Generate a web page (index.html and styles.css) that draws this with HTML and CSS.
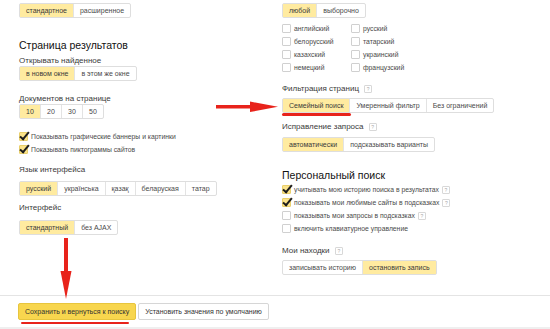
FILE: index.html
```html
<html>
<head>
    <title>Настройки поиска</title>
    <link rel="stylesheet" href="styles.css">
</head>
<body>
    <div class="page">
        <div class="cols">
            <div class="col left">
                <div class="seg"><span class="on">стандартное</span><span>расширенное</span></div>

                <h2 class="title">Страница результатов</h2>
                <div class="label first">Открывать найденное</div>
                <div class="seg"><span class="on">в новом окне</span><span>в этом же окне</span></div>

                <div class="label gap12">Документов на странице</div>
                <div class="seg nums"><span class="on">10</span><span>20</span><span>30</span><span>50</span></div>

                <div class="checks gap11">
                    <div class="check on"><i></i>Показывать графические баннеры и картинки</div>
                    <div class="check on"><i></i>Показывать пиктограммы сайтов</div>
                </div>

                <div class="label gap8">Язык интерфейса</div>
                <div class="seg gap6"><span class="on">русский</span><span>українська</span><span>қазақ</span><span>беларуская</span><span>татар</span></div>

                <div class="label gap6">Интерфейс</div>
                <div class="seg gap7"><span class="on">стандартный</span><span>без AJAX</span></div>
            </div>

            <div class="col right">
                <div class="seg"><span class="on">любой</span><span>выборочно</span></div>

                <div class="langs">
                    <div class="check"><i></i>английский</div>
                    <div class="check"><i></i>русский</div>
                    <div class="check"><i></i>белорусский</div>
                    <div class="check"><i></i>татарский</div>
                    <div class="check"><i></i>казахский</div>
                    <div class="check"><i></i>украинский</div>
                    <div class="check"><i></i>немецкий</div>
                    <div class="check"><i></i>французский</div>
                </div>

                <div class="label gap9">Фильтрация страниц <b class="q">?</b></div>
                <div class="seg gap4"><span class="on marked">Семейный поиск</span><span>Умеренный фильтр</span><span>Без ограничений</span></div>

                <div class="label gap8">Исправление запроса <b class="q">?</b></div>
                <div class="seg gap5"><span class="on">автоматически</span><span>подсказывать варианты</span></div>

                <h2 class="title personal">Персональный поиск</h2>
                <div class="checks">
                    <div class="check on"><i></i>учитывать мою историю поиска в результатах <b class="q">?</b></div>
                    <div class="check on"><i></i>показывать мои любимые сайты в подсказках <b class="q">?</b></div>
                    <div class="check"><i></i>показывать мои запросы в подсказках <b class="q">?</b></div>
                    <div class="check"><i></i>включить клавиатурное управление</div>
                </div>

                <div class="label gap10">Мои находки <b class="q">?</b></div>
                <div class="seg gap4"><span>записывать историю</span><span class="on">остановить запись</span></div>
            </div>
        </div>

        <div class="footer">
            <button class="btn save">Сохранить и вернуться к поиску</button>
            <button class="btn">Установить значения по умолчанию</button>
        </div>

        <svg class="arrow arrow-right" width="64" height="14" viewBox="0 0 64 14">
            <rect x="0" y="5" width="36" height="3.5" fill="#e8231b"/>
            <polygon points="34,1.5 62,6.8 34,12" fill="#e8231b"/>
        </svg>
        <svg class="arrow arrow-down" width="14" height="62" viewBox="0 0 14 62">
            <rect x="5" y="0" width="4" height="36" fill="#e8231b"/>
            <polygon points="1.5,33 12.5,33 7,61" fill="#e8231b"/>
        </svg>
    </div>
</body>
</html>
```

FILE: styles.css
```css
body {
    margin: 0;
    background: #efefef;
    font-family: "Liberation Sans", Arial, sans-serif;
    color: #333;
}

.page {
    position: relative;
    width: 550px; height: 327px;
    background: white;
}

.cols {
    display: flex;
    height: 295px;
}

.col { padding-top: 3px; }
.left { width: 263px; padding-left: 19px; }
.right { width: 268px; }

/* segmented buttons */
.seg {
    display: flex; width: max-content;
    border: 1px solid #dedede; border-radius: 2px;
}
.seg span {
    position: relative;
    height: 13px; line-height: 13px;
    padding: 0 6px;
    font-size: 7px; color: #4a4a4a;
    border-left: 1px solid #e3e3e3;
}
.seg span:first-child { border-left: none; }
.seg .on { background: #ffeba0; color: #3a3a3a; }
.nums span { padding: 0 6px; width: 8px; text-align: center; }
.seg .marked::after {
    content: ""; position: absolute;
    left: -1px; right: -2px; bottom: -4px; height: 3px;
    background: #e8231b; border-radius: 2px;
}

.title {
    margin: 19px 0 0; font-weight: normal;
    font-size: 10.5px; line-height: 16px; color: #111;
}
.title.personal { margin-top: 16px; line-height: 15px; }

.label {
    font-size: 8px; line-height: 11px; color: #3a3a3a;
}
.label.first { margin-top: 2px; }

.gap4 { margin-top: 4px; }
.gap5 { margin-top: 5px; }
.gap6 { margin-top: 6px; }
.gap7 { margin-top: 7px; }
.gap8 { margin-top: 8px; }
.gap9 { margin-top: 9px; }
.gap10 { margin-top: 10px; }
.gap11 { margin-top: 11px; }
.gap12 { margin-top: 12px; }

/* checkboxes */
.check {
    display: flex; align-items: center;
    height: 13px;
    font-size: 6.8px; color: #4a4a4a;
}
.check i {
    width: 7px; height: 7px; margin-right: 3px;
    border: 1px solid #d0d0d0; border-radius: 1px;
    background: white;
}
.check.on i {
    position: relative;
    background: #fbe38a; border-color: #e9cf6c;
}
.check.on i::after {
    content: ""; position: absolute;
    left: 2px; top: -3px; width: 3px; height: 8px;
    border: solid #1d1d1d; border-width: 0 2px 2px 0;
    transform: rotate(40deg);
}

.langs {
    display: grid; grid-template-columns: 69px 80px;
    margin-top: 4px;
}

.q {
    display: inline-block; vertical-align: middle;
    width: 6px; height: 6px; margin-left: 3px;
    border: 1px solid #d8d8d8; border-radius: 1px;
    font-size: 5px; line-height: 6px; text-align: center;
    font-weight: normal; color: #aaa;
}

.footer {
    position: relative;
    display: flex; gap: 2px;
    padding: 7px 0 0 18px; height: 24px;
    border-top: 1px solid #e4e4e4;
}
.btn {
    height: 17px; padding: 0 6px;
    font-family: inherit; font-size: 7px; color: #333;
    background: white; border: 1px solid #d6d6d6; border-radius: 2px;
}
.btn.save {
    position: relative;
    background: #f8d64e; border-color: #e7c53e;
}
.btn.save::after {
    content: ""; position: absolute;
    left: 2px; right: 6px; bottom: -5px; height: 2px;
    background: #e8231b; border-radius: 1px;
}

.arrow { position: absolute; }
.arrow-right { left: 216px; top: 100px; }
.arrow-down { left: 59px; top: 238px; }
```
